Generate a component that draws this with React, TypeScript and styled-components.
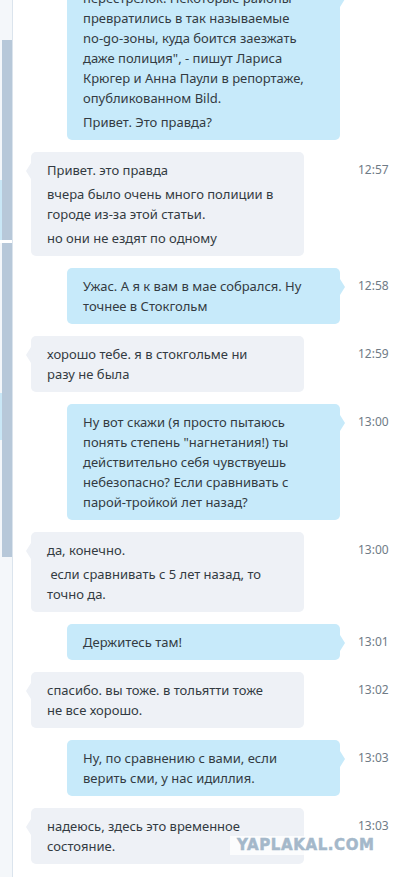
import React from "react";
import styled, { createGlobalStyle } from "styled-components";

const GlobalStyle = createGlobalStyle`
  html, body { margin: 0; padding: 0; background: #ffffff; }
  body { font-family: "Noto Sans", "Open Sans", "DejaVu Sans", sans-serif; }
  * { box-sizing: border-box; }
`;

const Page = styled.div`
  display: flex;
  width: 400px;
  height: 877px;
  overflow: hidden;
  background: #ffffff;
`;

const Sidebar = styled.div`
  display: flex;
  width: 13px;
  flex: none;
  background: #f4f7fa;
  border-right: 1px solid #dbe4ed;
`;

const SideCol = styled.div<{ $w: number }>`
  display: flex;
  flex-direction: column;
  width: ${(p) => p.$w}px;
  flex: none;
`;

const Piece = styled.div<{ $h: number; $c: string }>`
  height: ${(p) => p.$h}px;
  flex: none;
  background: ${(p) => p.$c};
`;

const Chat = styled.div`
  position: relative;
  flex: 1;
  display: flex;
  flex-direction: column;
  justify-content: flex-end;
  gap: 12px;
  padding-bottom: 13px;
  overflow: hidden;
`;

const Row = styled.div`
  display: grid;
  grid-template-columns: 332px 1fr;
  flex: none;
`;

const Bubble = styled.div<{ $out: boolean }>`
  position: relative;
  width: 273px;
  margin-left: ${(p) => (p.$out ? 54 : 18)}px;
  padding: 8px 16px;
  border-radius: 5px;
  background: ${(p) => (p.$out ? "#c7eafa" : "#eef1f6")};
  color: #333b42;
  font-size: 13px;
  line-height: 20px;
  display: flex;
  flex-direction: column;
  gap: 4px;

  &::after {
    content: "";
    position: absolute;
    top: 11px;
    ${(p) => (p.$out ? "right: -5px;" : "left: -5px;")}
    width: 0;
    height: 0;
    border-top: 8px solid transparent;
    border-bottom: 8px solid transparent;
    ${(p) =>
      p.$out
        ? "border-left: 5px solid #c7eafa;"
        : "border-right: 5px solid #eef1f6;"}
  }
`;

const Para = styled.div`
  white-space: pre;
`;

const Time = styled.div`
  padding: 8px 0 0 13px;
  font-size: 12px;
  line-height: 20px;
  color: #6f7b86;
`;

const Watermark = styled.div`
  position: absolute;
  left: 217px;
  top: 836px;
  height: 19px;
  padding: 0 10px 0 7px;
  background: rgba(255, 255, 255, 0.75);
  color: #a4b8ca;
  font-family: "DejaVu Sans", sans-serif;
  font-weight: 900;
  font-size: 15px;
  line-height: 19px;
  letter-spacing: 0.6px;
  -webkit-text-stroke: 0.5px #a4b8ca;
`;

type Msg = { out: boolean; time?: string; paras: string[] };

const messages: Msg[] = [
  {
    out: true,
    paras: [
      "перестрелок. Некоторые районы\nпревратились в так называемые\nno-go-зоны, куда боится заезжать\nдаже полиция\", - пишут Лариса\nКрюгер и Анна Паули в репортаже,\nопубликованном Bild.",
      "Привет. Это правда?",
    ],
  },
  {
    out: false,
    time: "12:57",
    paras: [
      "Привет. это правда",
      "вчера было очень много полиции в\nгороде из-за этой статьи.",
      "но они не ездят по одному",
    ],
  },
  {
    out: true,
    time: "12:58",
    paras: ["Ужас. А я к вам в мае собрался. Ну\nточнее в Стокгольм"],
  },
  {
    out: false,
    time: "12:59",
    paras: ["хорошо тебе. я в стокгольме ни\nразу не была"],
  },
  {
    out: true,
    time: "13:00",
    paras: [
      "Ну вот скажи (я просто пытаюсь\nпонять степень \"нагнетания!) ты\nдействительно себя чувствуешь\nнебезопасно? Если сравнивать с\nпарой-тройкой лет назад?",
    ],
  },
  {
    out: false,
    time: "13:00",
    paras: ["да, конечно.", " если сравнивать с 5 лет назад, то\nточно да."],
  },
  { out: true, time: "13:01", paras: ["Держитесь там!"] },
  {
    out: false,
    time: "13:02",
    paras: ["спасибо. вы тоже. в тольятти тоже\nне все хорошо."],
  },
  {
    out: true,
    time: "13:03",
    paras: ["Ну, по сравнению с вами, если\nверить сми, у нас идиллия."],
  },
  {
    out: false,
    time: "13:03",
    paras: ["надеюсь, здесь это временное\nсостояние."],
  },
];

export default function App() {
  return (
    <>
      <GlobalStyle />
      <Page>
        <Sidebar>
          <SideCol $w={2}>
            <Piece $h={180} $c="#f4f7fa" />
            <Piece $h={60} $c="#c9e7f6" />
            <Piece $h={3} $c="#ffffff" />
            <Piece $h={150} $c="#f4f7fa" />
            <Piece $h={47} $c="#c9e7f6" />
          </SideCol>
          <SideCol $w={10}>
            <Piece $h={40} $c="#f4f7fa" />
            <Piece $h={200} $c="#b7c8d9" />
            <Piece $h={3} $c="#ffffff" />
            <Piece $h={314} $c="#b7c8d9" />
          </SideCol>
        </Sidebar>
        <Chat>
          {messages.map((m, i) => (
            <Row key={i}>
              <Bubble $out={m.out}>
                {m.paras.map((p, j) => (
                  <Para key={j}>{p}</Para>
                ))}
              </Bubble>
              <Time>{m.time}</Time>
            </Row>
          ))}
          <Watermark>YAPLAKAL.COM</Watermark>
        </Chat>
      </Page>
    </>
  );
}
